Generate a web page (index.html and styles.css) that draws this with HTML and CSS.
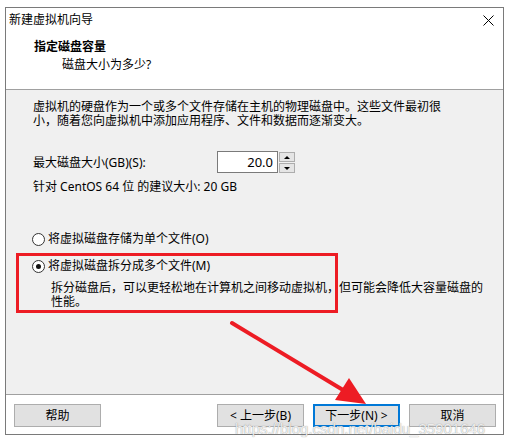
FILE: index.html
```html
<!DOCTYPE html>
<html lang="zh-CN">
<head>
<meta charset="utf-8">
<title>新建虚拟机向导</title>
<link rel="stylesheet" href="styles.css">
</head>
<body>
<div class="window">
  <div class="titlebar">
    <span class="title">新建虚拟机向导</span>
    <svg class="close" width="11" height="11" viewBox="0 0 11 11"><path d="M0.5 0.5 L10.5 10.5 M10.5 0.5 L0.5 10.5" stroke="#000" stroke-width="1"/></svg>
  </div>
  <div class="header">
    <div class="h-title">指定磁盘容量</div>
    <div class="h-sub">磁盘大小为多少?</div>
  </div>
  <div class="content">
    <p class="para">虚拟机的硬盘作为一个或多个文件存储在主机的物理磁盘中。这些文件最初很<br>小，随着您向虚拟机中添加应用程序、文件和数据而逐渐变大。</p>
    <div class="size-row">
      <span class="label">最大磁盘大小(GB)(S):</span>
      <div class="spin">
        <div class="spin-input">20.0</div>
        <div class="spin-btns">
          <div class="spin-btn"><span class="tri up"></span></div>
          <div class="spin-btn"><span class="tri down"></span></div>
        </div>
      </div>
    </div>
    <div class="reco">针对 CentOS 64 位 的建议大小: 20 GB</div>
    <div class="radio-row first"><span class="radio"></span><span>将虚拟磁盘存储为单个文件(O)</span></div>
    <div class="radio-row second"><span class="radio checked"></span><span>将虚拟磁盘拆分成多个文件(M)</span></div>
    <p class="desc">拆分磁盘后，可以更轻松地在计算机之间移动虚拟机，但可能会降低大容量磁盘的<br>性能。</p>
  </div>
  <div class="footer">
    <button class="btn">帮助</button>
    <div class="nav">
      <button class="btn">&lt; 上一步(B)</button>
      <button class="btn default">下一步(N) &gt;</button>
      <button class="btn">取消</button>
    </div>
  </div>
</div>
<div class="redbox"></div>
<svg class="arrow" width="512" height="446" viewBox="0 0 512 446">
  <line x1="232" y1="323" x2="348" y2="393" stroke="#ed1c24" stroke-width="4" stroke-linecap="round"/>
  <polygon points="366,404 335,400 349,378" fill="#ed1c24"/>
</svg>
<div class="watermark">https://blog.csdn.net/baidu_35901646</div>
</body>
</html>
```
FILE: styles.css
```css
* { box-sizing: border-box; }
html, body { margin: 0; padding: 0; background: #fff; }
body {
  width: 512px;
  height: 446px;
  overflow: hidden;
  position: relative;
  font-family: "Noto Sans", "Noto Sans CJK SC", sans-serif;
  font-size: 12px;
  color: #000;
}
.window {
  margin: 7px 0 0 5px;
  width: 499px;
  height: 428px;
  border: 1px solid #7a7a7a;
  display: flex;
  flex-direction: column;
}
.titlebar {
  height: 24px;
  background: #fff;
  display: flex;
  align-items: center;
  justify-content: space-between;
  padding: 0 9px 0 3px;
  line-height: 24px;
}
.close { display: block; }
.header {
  height: 58px;
  background: #fff;
  border-bottom: 1px solid #a0a0a0;
  padding: 8px 0 0 28px;
}
.h-title { font-weight: bold; line-height: 14px; }
.h-sub { line-height: 14px; margin: 4px 0 0 28px; }
.content {
  height: 305px;
  background: #f0f0f0;
  border-bottom: 1px solid #a0a0a0;
  padding: 10px 0 0 27px;
}
.para { margin: 0; line-height: 14px; }
.size-row {
  margin-top: 22px;
  height: 23px;
  display: flex;
  align-items: center;
}
.label { width: 184px; }
.spin { display: flex; height: 23px; }
.spin-input {
  width: 61px;
  height: 22px;
  margin-top: 1px;
  background: #fff;
  border: 1px solid #7a7a7a;
  text-align: right;
  padding-right: 4px;
  line-height: 20px;
  font-size: 13px;
}
.spin-btns {
  display: flex;
  flex-direction: column;
  gap: 1px;
  margin: 2px 0 0 1px;
}
.spin-btn {
  width: 16px;
  height: 10px;
  border: 1px solid #adadad;
  background: #e5e5e5;
  display: flex;
  align-items: center;
  justify-content: center;
}
.tri { width: 0; height: 0; border-left: 3px solid transparent; border-right: 3px solid transparent; }
.tri.up { border-bottom: 3px solid #000; }
.tri.down { border-top: 3px solid #000; }
.reco { margin-top: 7px; line-height: 14px; }
.radio-row {
  display: flex;
  align-items: center;
  gap: 3px;
  line-height: 14px;
  margin-left: -1px;
}
.radio-row.first { margin-top: 38px; }
.radio-row.second { margin-top: 13px; }
.radio {
  width: 13px;
  height: 13px;
  border-radius: 50%;
  border: 1px solid #333;
  background: #fff;
  display: flex;
  align-items: center;
  justify-content: center;
}
.radio.checked::after {
  content: "";
  width: 5px;
  height: 5px;
  border-radius: 50%;
  background: #111;
}
.desc { margin: 8px 0 0 18px; line-height: 14px; }
.footer {
  height: 39px;
  display: flex;
  padding: 9px 7px 0 8px;
  align-items: flex-start;
}
.nav { margin-left: auto; display: flex; gap: 9px; }
.btn {
  width: 87px;
  height: 23px;
  border: 1px solid #adadad;
  background: #e1e1e1;
  font-family: "Noto Sans", "Noto Sans CJK SC", sans-serif;
  font-size: 12px;
  color: #000;
  padding: 0;
  line-height: 14px;
  display: flex;
  align-items: center;
  justify-content: center;
}
.btn.default { border: 2px solid #0078d7; }
.redbox {
  position: absolute;
  left: 16px;
  top: 253px;
  width: 322px;
  height: 60px;
  border: 3px solid #ed1c24;
}
.arrow { position: absolute; left: 0; top: 0; pointer-events: none; }
.watermark {
  position: absolute;
  left: 235px;
  top: 423px;
  line-height: 11px;
  font-family: "Liberation Sans", sans-serif;
  font-size: 15px;
  color: rgba(255,255,255,0.85);
  text-shadow: 0 0 1px rgba(100,100,100,0.8);
  white-space: nowrap;
}
```
